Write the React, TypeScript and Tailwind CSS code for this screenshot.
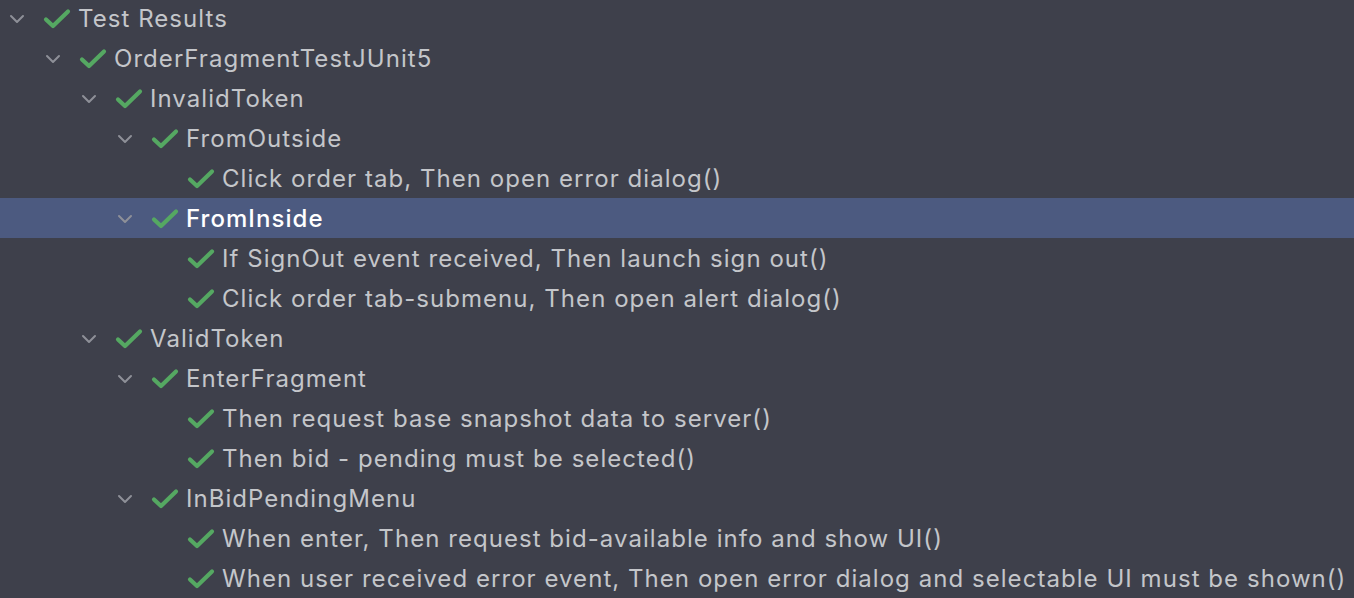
import React from 'react';

type Node = { label: string; level: number; leaf?: boolean; selected?: boolean };

const rows: Node[] = [
  { label: 'Test Results', level: 0 },
  { label: 'OrderFragmentTestJUnit5', level: 1 },
  { label: 'InvalidToken', level: 2 },
  { label: 'FromOutside', level: 3 },
  { label: 'Click order tab, Then open error dialog()', level: 4, leaf: true },
  { label: 'FromInside', level: 3, selected: true },
  { label: 'If SignOut event received, Then launch sign out()', level: 4, leaf: true },
  { label: 'Click order tab-submenu, Then open alert dialog()', level: 4, leaf: true },
  { label: 'ValidToken', level: 2 },
  { label: 'EnterFragment', level: 3 },
  { label: 'Then request base snapshot data to server()', level: 4, leaf: true },
  { label: 'Then bid - pending must be selected()', level: 4, leaf: true },
  { label: 'InBidPendingMenu', level: 3 },
  { label: 'When enter, Then request bid-available info and show UI()', level: 4, leaf: true },
  { label: 'When user received error event, Then open error dialog and selectable UI must be shown()', level: 4, leaf: true },
];

function Chevron() {
  return (
    <svg width="16" height="10" viewBox="0 0 16 10" className="text-[#8e9098]">
      <path d="M2 2 L8 8 L14 2" fill="none" stroke="currentColor" strokeWidth="2" strokeLinecap="round" strokeLinejoin="round" />
    </svg>
  );
}

function Check() {
  return (
    <svg width="28" height="22" viewBox="0 0 28 22" className="text-[#55a862]">
      <path d="M3 11.5 L10 18 L25 3.5" fill="none" stroke="currentColor" strokeWidth="4.2" strokeLinecap="round" strokeLinejoin="round" />
    </svg>
  );
}

const indent: Record<number, string> = {
  0: 'pl-[9px]',
  1: 'pl-[45px]',
  2: 'pl-[81px]',
  3: 'pl-[117px]',
  4: 'pl-[153px]',
};

export default function App() {
  return (
    <div className="w-[1354px] h-[598px] overflow-hidden bg-[#3e404b] font-['Inter',sans-serif]">
      <div className="-mt-[2px] flex flex-col">
        {rows.map((r, i) => (
          <div
            key={i}
            className={`flex h-[40px] items-center pt-[2px] ${indent[r.level]} ${r.selected ? 'bg-[#4c5a80]' : ''}`}
          >
            <div className="flex w-[16px] justify-center">{!r.leaf && <Chevron />}</div>
            <div className="ml-[18px] flex w-[28px] justify-center">
              <Check />
            </div>
            <span
              className={`ml-[7px] whitespace-nowrap text-[24px] tracking-[1.05px] ${
                r.selected ? 'font-medium text-white' : 'text-[#c4c6ca]'
              }`}
            >
              {r.label}
            </span>
          </div>
        ))}
      </div>
    </div>
  );
}
